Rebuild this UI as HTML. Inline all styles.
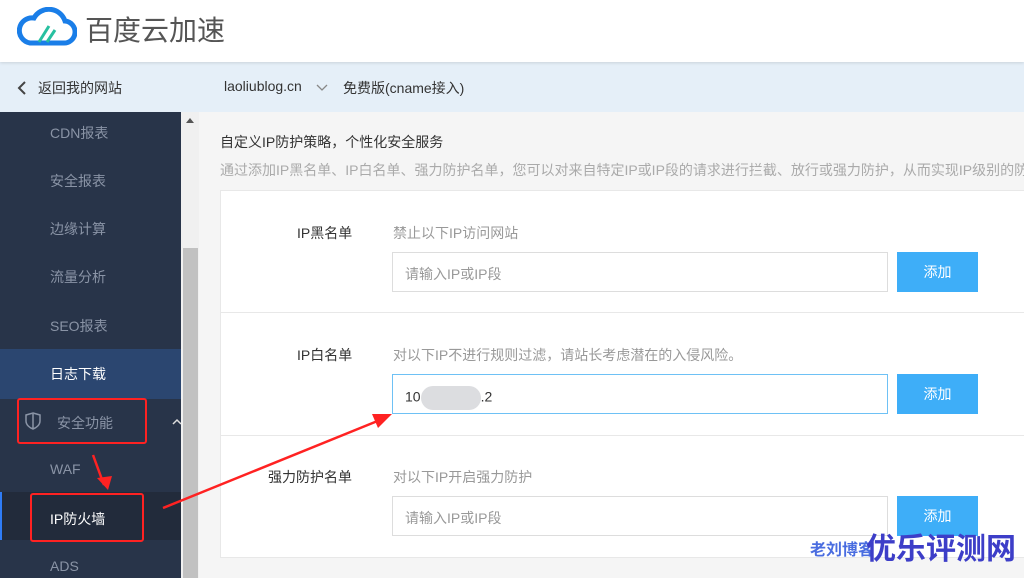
<!DOCTYPE html>
<html><head><meta charset="utf-8"><style>
*{margin:0;padding:0;box-sizing:border-box}
body{width:1024px;height:578px;overflow:hidden;position:relative;background:#f5f5f5;font-family:"Liberation Sans","Noto Sans CJK SC",sans-serif}
.abs{position:absolute}
.hdr{left:0;top:0;width:1024px;height:62px;background:#fff;box-shadow:0 1px 3px rgba(0,0,0,.12);z-index:2}
.nav{left:0;top:62px;width:1024px;height:50px;background:#e5eff8;font-size:14px;color:#333}
.side{left:0;top:112px;width:181px;height:466px;background:#283449}
.side div{position:absolute;left:50px;font-size:14px;color:#8a94a6}
.sb{left:181px;top:112px;width:18px;height:466px;background:#f0f0f0}
.card{left:220px;top:190px;width:810px;height:368px;background:#fff;border:1px solid #e8e8e8}
.lbl{font-size:14px;color:#333}
.hint{font-size:14px;color:#999}
.inp{left:392px;width:496px;height:40px;border:1px solid #ddd;background:#fff;font-size:14px;color:#999;padding:11px 12px}
.btn{left:897px;width:81px;height:40px;background:#3eaef8;color:#fff;font-size:14px;text-align:center;line-height:40px}
.red{border:2px solid #f22;border-radius:3px}
</style></head><body>
<div class="abs hdr">
<svg class="abs" style="left:17px;top:7px" width="60" height="40" viewBox="0 0 60 40"><path d="M13 36 H46 A11 11 0 0 0 48 14 A17 17 0 0 0 17 11 A12.5 12.5 0 0 0 13 36Z" fill="none" stroke="#1a7ee8" stroke-width="5"/><path d="M22 35 L32 19 M30 35 L38 23" stroke="#27c0a0" stroke-width="3"/></svg>
<div class="abs" style="left:85px;top:9px;font-size:28px;color:#555">百度云加速</div>
</div>
<div class="abs nav">
<svg class="abs" style="left:17px;top:19px" width="10" height="14" viewBox="0 0 10 14"><path d="M8 1 L2 7 L8 13" fill="none" stroke="#444" stroke-width="2"/></svg>
<div class="abs" style="left:38px;top:16px">返回我的网站</div>
<div class="abs" style="left:224px;top:16px">laoliublog.cn</div>
<svg class="abs" style="left:316px;top:22px" width="12" height="8" viewBox="0 0 12 8"><path d="M1 1 L6 6 L11 1" fill="none" stroke="#888" stroke-width="1.3"/></svg>
<div class="abs" style="left:343px;top:16px">免费版(cname接入)</div>
</div>
<div class="abs side">
<div style="top:11px">CDN报表</div>
<div style="top:59px">安全报表</div>
<div style="top:107px">边缘计算</div>
<div style="top:155px">流量分析</div>
<div style="top:204px">SEO报表</div>
<div style="left:0;top:237px;width:181px;height:50px;background:#2b4670"></div>
<div style="top:252px;color:#fff">日志下载</div>
<div style="left:0;top:380px;width:181px;height:48px;background:#222b3b"></div>
<div style="left:0;top:380px;width:2px;height:48px;background:#2f7cf6"></div>
<svg class="abs" style="left:25px;top:300px" width="16" height="18" viewBox="0 0 16 18"><path d="M8 1 L15 3 V9 C15 13 11 16 8 17 C5 16 1 13 1 9 V3Z M8 2 V16" fill="none" stroke="#8a94a6" stroke-width="1.5"/></svg>
<div style="left:57px;top:301px">安全功能</div>
<svg class="abs" style="left:172px;top:306px" width="10" height="7" viewBox="0 0 10 7"><path d="M1 6 L5 2 L9 6" fill="none" stroke="#ddd" stroke-width="1.5"/></svg>
<div style="top:349px">WAF</div>
<div style="top:397px;color:#fff">IP防火墙</div>
<div style="top:446px">ADS</div>
</div>
<div class="abs red" style="left:17px;top:398px;width:130px;height:46px"></div>
<div class="abs red" style="left:30px;top:493px;width:114px;height:49px"></div>
<div class="abs sb"><div class="abs" style="left:2px;top:136px;width:15px;height:330px;background:#c1c1c1"></div><div class="abs" style="left:5px;top:6px;border:4px solid transparent;border-bottom:5px solid #555;border-top:0"></div></div>
<div class="abs" style="left:220px;top:132px;font-size:14px;color:#333">自定义IP防护策略，个性化安全服务</div>
<div class="abs" style="left:220px;top:160px;font-size:14px;color:#aaa;white-space:nowrap">通过添加IP黑名单、IP白名单、强力防护名单，您可以对来自特定IP或IP段的请求进行拦截、放行或强力防护，从而实现IP级别的防护</div>
<div class="abs card"></div>
<div class="abs" style="left:221px;top:312px;width:803px;height:1px;background:#e8e8e8"></div>
<div class="abs" style="left:221px;top:435px;width:803px;height:1px;background:#e8e8e8"></div>
<div class="abs lbl" style="left:297px;top:223px">IP黑名单</div>
<div class="abs hint" style="left:393px;top:223px">禁止以下IP访问网站</div>
<div class="abs inp" style="top:252px">请输入IP或IP段</div>
<div class="abs btn" style="top:252px">添加</div>
<div class="abs lbl" style="left:297px;top:345px">IP白名单</div>
<div class="abs hint" style="left:393px;top:345px">对以下IP不进行规则过滤，请站长考虑潜在的入侵风险。</div>
<div class="abs inp" style="top:374px;border-color:#6ec1f5;color:#333">10<span style="display:inline-block;width:60px;height:24px;vertical-align:middle;background:#dcdde0;border-radius:12px"></span>.2</div>
<div class="abs btn" style="top:374px">添加</div>
<div class="abs lbl" style="left:268px;top:467px">强力防护名单</div>
<div class="abs hint" style="left:393px;top:467px">对以下IP开启强力防护</div>
<div class="abs inp" style="top:496px">请输入IP或IP段</div>
<div class="abs btn" style="top:496px">添加</div>
<svg class="abs" style="left:0;top:0" width="1024" height="578"><path d="M163 508 L380 420" stroke="#f22" stroke-width="2.5"/><path d="M392 414 L372 414 L378 428Z" fill="#f22"/><path d="M93 455 L104 485" stroke="#f22" stroke-width="2.5"/><path d="M108 490 L97 478 L112 476Z" fill="#f22"/></svg>
<div class="abs" style="left:810px;top:536px;font-size:16px;font-weight:bold;color:#4a6de0">老刘博客</div>
<div class="abs" style="left:866px;top:532px;font-size:30px;font-weight:bold;color:#3d3ec8;line-height:36px">优乐评测网</div>
</body></html>
